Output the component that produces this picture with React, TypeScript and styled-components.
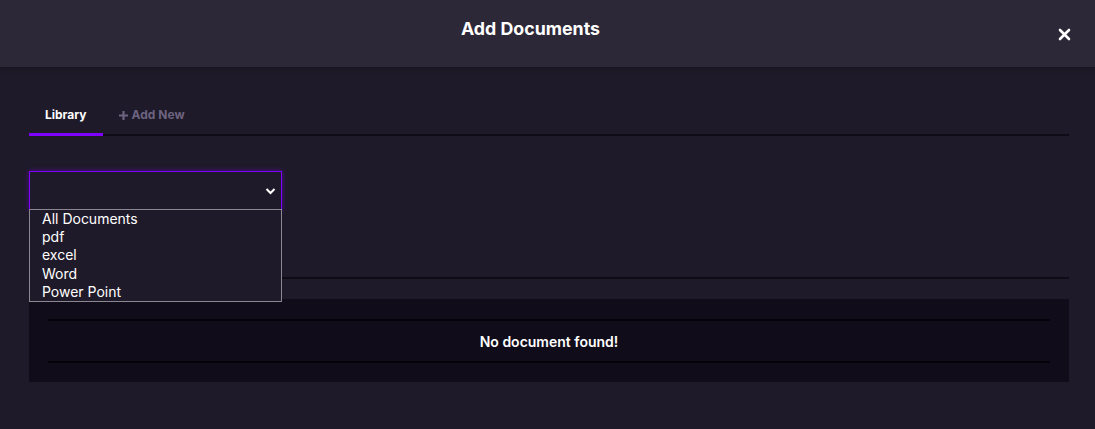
import React from "react";
import styled, { createGlobalStyle } from "styled-components";

const Global = createGlobalStyle`
  html, body { margin: 0; padding: 0; background: #1f1a29; }
  body { font-family: Inter, "Noto Sans", Arial, sans-serif; color: #fff; }
  * { box-sizing: border-box; }
`;

const Modal = styled.div`
  width: 1095px;
  height: 429px;
  background: #1f1a29;
  display: flex;
  flex-direction: column;
`;

const Header = styled.header`
  height: 67px;
  background: #2d2838;
  display: flex;
  align-items: center;
  padding: 0 23px 0 5px;
  box-shadow: 0 2px 4px rgba(0, 0, 0, 0.25);
`;

const Title = styled.h2`
  flex: 1;
  text-align: center;
  margin: 0 0 10px 0;
  font-size: 17.8px;
  font-weight: 700;
  color: #fff;
`;

const Close = styled.button`
  width: 16px;
  height: 16px;
  margin-top: 2px;
  background: none;
  border: none;
  padding: 0;
  cursor: pointer;
  display: flex;
  align-items: center;
  justify-content: center;
`;

const Body = styled.div`
  padding: 33px 26px 0 29px;
  display: flex;
  flex-direction: column;
`;

const Tabs = styled.div`
  display: flex;
  border-bottom: 2px solid #0f0b16;
  height: 36px;
`;

const Tab = styled.div<{ $active?: boolean }>`
  padding: 0 16px;
  font-size: 12px;
  font-weight: 700;
  line-height: 30px;
  color: ${(p) => (p.$active ? "#ffffff" : "#6c6380")};
  border-bottom: 3px solid ${(p) => (p.$active ? "#8000ff" : "transparent")};
  margin-bottom: -2px;
  display: flex;
  align-items: flex-start;
  gap: 4px;
`;

const PlusIcon = styled.svg`
  margin-top: 11px;
  flex: none;
`;

const Filter = styled.div`
  position: relative;
  margin-top: 35px;
  width: 253px;
`;

const Select = styled.div`
  height: 39px;
  border: 1px solid #8000ff;
  box-shadow: 0 0 5px rgba(128, 0, 255, 0.5);
  background: #1f1a29;
  display: flex;
  align-items: center;
  justify-content: flex-end;
  padding-right: 5px;
`;

const Options = styled.ul`
  position: absolute;
  top: 38px;
  left: 0;
  width: 253px;
  margin: 0;
  padding: 0;
  list-style: none;
  background: #1f1a29;
  border: 1px solid #8a8791;
  z-index: 2;
`;

const Option = styled.li`
  padding: 0 12px;
  font-size: 14px;
  line-height: 18.2px;
  color: #ffffff;
`;

const Divider = styled.div`
  margin-top: 67px;
  height: 2px;
  background: #0f0b16;
`;

const Table = styled.div`
  margin-top: 20px;
  background: #100c1a;
  padding: 20px 19px 19px 19px;
`;

const EmptyRow = styled.div`
  border-top: 2px solid #05030a;
  border-bottom: 2px solid #05030a;
  height: 44px;
  display: flex;
  align-items: center;
  justify-content: center;
  font-size: 14px;
  font-weight: 600;
  color: #fff;
`;

export default function App() {
  return (
    <>
      <Global />
      <Modal>
        <Header>
          <Title>Add Documents</Title>
          <Close aria-label="close">
            <svg width="13" height="13" viewBox="0 0 13 13">
              <path d="M2 2 L11 11 M11 2 L2 11" stroke="#fff" strokeWidth="2.6" strokeLinecap="round" />
            </svg>
          </Close>
        </Header>
        <Body>
          <Tabs>
            <Tab $active>Library</Tab>
            <Tab>
              <PlusIcon width="9" height="9" viewBox="0 0 9 9">
                <path d="M4.5 0.5 V8.5 M0.5 4.5 H8.5" stroke="#6c6380" strokeWidth="2.2" strokeLinecap="round" />
              </PlusIcon>
              Add New
            </Tab>
          </Tabs>
          <Filter>
            <Select>
              <svg width="11" height="8" viewBox="0 0 11 8">
                <path d="M1.5 2 L5.5 6 L9.5 2" stroke="#fff" strokeWidth="2" fill="none" />
              </svg>
            </Select>
            <Options>
              <Option>All Documents</Option>
              <Option>pdf</Option>
              <Option>excel</Option>
              <Option>Word</Option>
              <Option>Power Point</Option>
            </Options>
          </Filter>
          <Divider />
          <Table>
            <EmptyRow>No document found!</EmptyRow>
          </Table>
        </Body>
      </Modal>
    </>
  );
}
